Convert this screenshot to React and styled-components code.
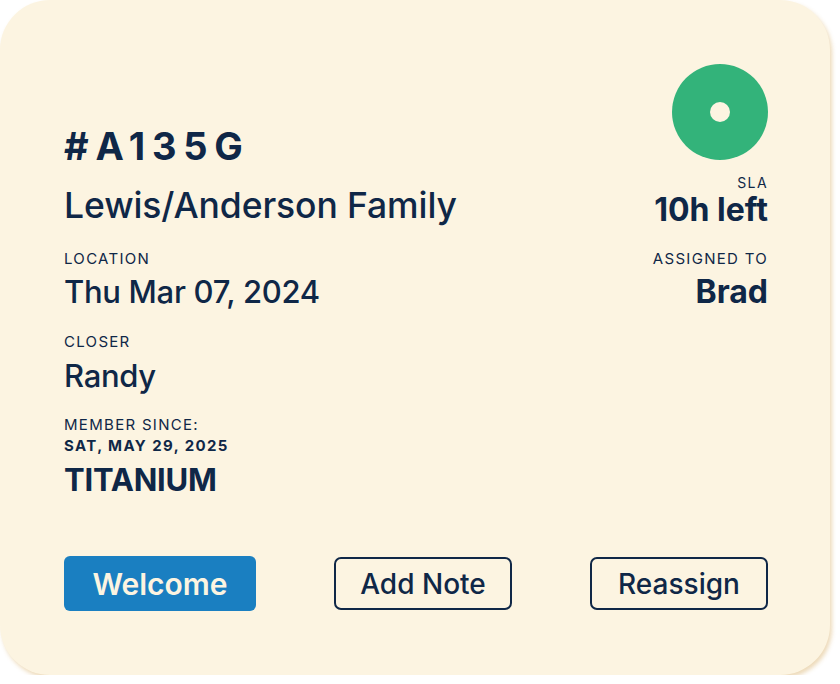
import styled, { createGlobalStyle } from "styled-components";

const NAVY = "#0f2747";
const CREAM = "#fcf4e1";

const GlobalStyle = createGlobalStyle`
	html, body {
		margin: 0;
		padding: 0;
		background: #ffffff;
	}
	body {
		font-family: Inter, "Noto Sans", "Liberation Sans", sans-serif;
		color: ${NAVY};
	}
`;

const App = () => {
	return (
		<>
			<GlobalStyle />
			<Card>
				<Top>
					<LeftColumn>
						<TicketId>#A135G</TicketId>
						<FamilyName>Lewis/Anderson Family</FamilyName>
						<Label $gap={27}>LOCATION</Label>
						<Value $gap={10}>Thu Mar 07, 2024</Value>
						<Label $gap={27}>CLOSER</Label>
						<Value $gap={11}>Randy</Value>
						<Label $gap={26}>MEMBER SINCE:</Label>
						<SinceDate>SAT, MAY 29, 2025</SinceDate>
						<Value $gap={11} $bold>
							TITANIUM
						</Value>
					</LeftColumn>
					<RightColumn>
						<StatusDot>
							<DotCenter />
						</StatusDot>
						<SmallLabel>SLA</SmallLabel>
						<SideValue $gap={4}>10h left</SideValue>
						<Label $gap={25}>ASSIGNED TO</Label>
						<SideValue $gap={10}>Brad</SideValue>
					</RightColumn>
				</Top>
				<Actions>
					<PrimaryButton type="button">Welcome</PrimaryButton>
					<OutlineButton type="button">Add Note</OutlineButton>
					<OutlineButton type="button">Reassign</OutlineButton>
				</Actions>
			</Card>
		</>
	);
};
export default App;

const Card = styled.div`
	box-sizing: border-box;
	width: 830px;
	height: 675px;
	padding: 64px 62px 64px 64px;
	background: ${CREAM};
	border-radius: 50px;
	box-shadow: 2px 3px 4px rgba(214, 172, 100, 0.45);
	display: flex;
	flex-direction: column;
`;

const Top = styled.div`
	display: flex;
	justify-content: space-between;
	align-items: flex-start;
`;

const LeftColumn = styled.div`
	display: flex;
	flex-direction: column;
	align-items: flex-start;
	padding-top: 63px;
`;

const RightColumn = styled.div`
	display: flex;
	flex-direction: column;
	align-items: flex-end;
	text-align: right;
`;

const TicketId = styled.div`
	font-size: 38px;
	line-height: 1;
	font-weight: 700;
	letter-spacing: 6.8px;
`;

const FamilyName = styled.div`
	margin-top: 23px;
	font-size: 35.5px;
	line-height: 1;
	font-weight: 500;
	letter-spacing: -0.1px;
`;

const Label = styled.div`
	margin-top: ${(p) => p.$gap}px;
	font-size: 15px;
	line-height: 1;
	font-weight: 400;
	letter-spacing: 1.3px;
`;

const SmallLabel = styled.div`
	margin-top: 16px;
	font-size: 14px;
	line-height: 1;
	letter-spacing: 1.4px;
`;

const Value = styled.div`
	margin-top: ${(p) => p.$gap}px;
	font-size: 31px;
	line-height: 1;
	font-weight: ${(p) => (p.$bold ? 700 : 500)};
	letter-spacing: ${(p) => (p.$bold ? "-0.2px" : "-0.3px")};
`;

const SideValue = styled.div`
	margin-top: ${(p) => p.$gap}px;
	font-size: 32px;
	line-height: 1;
	font-weight: 700;
`;

const SinceDate = styled.div`
	margin-top: 6px;
	font-size: 15px;
	line-height: 1;
	font-weight: 700;
	letter-spacing: 1.4px;
`;

const StatusDot = styled.div`
	width: 96px;
	height: 96px;
	border-radius: 50%;
	background: #33b37a;
	display: flex;
	align-items: center;
	justify-content: center;
`;

const DotCenter = styled.div`
	width: 20px;
	height: 20px;
	border-radius: 50%;
	background: ${CREAM};
`;

const Actions = styled.div`
	margin-top: auto;
	display: flex;
	justify-content: space-between;
	align-items: center;
`;

const BaseButton = styled.button`
	box-sizing: border-box;
	font-family: inherit;
	line-height: 1;
	cursor: pointer;
	display: flex;
	align-items: center;
	justify-content: center;
`;

const PrimaryButton = styled(BaseButton)`
	width: 192px;
	height: 55px;
	border: none;
	border-radius: 6px;
	background: #1a7fc1;
	color: ${CREAM};
	font-size: 30px;
	font-weight: 600;
`;

const OutlineButton = styled(BaseButton)`
	width: 178px;
	height: 53px;
	border: 2px solid ${NAVY};
	border-radius: 7px;
	background: transparent;
	color: ${NAVY};
	font-size: 28px;
	font-weight: 500;
`;
